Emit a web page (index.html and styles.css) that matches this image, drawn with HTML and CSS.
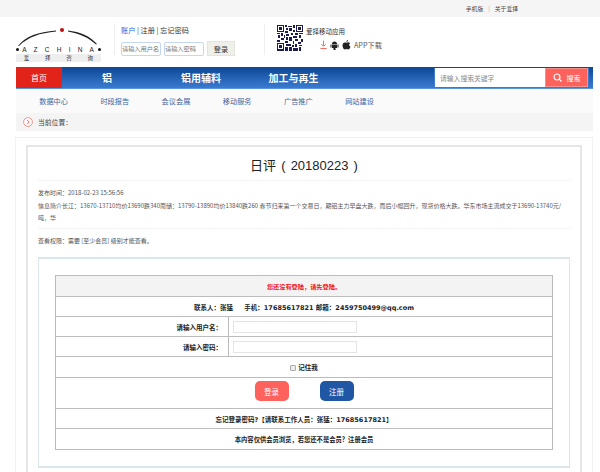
FILE: index.html
```html
<!DOCTYPE html>
<html lang="en">
<head>
  <meta charset="UTF-8">
  <meta name="viewport" content="width=device-width, initial-scale=1.0">
  <title>日评</title>
  <link rel="stylesheet" href="styles.css">
</head>
<body>

<div class="topbar">
  <a>手机版</a><span class="topbar-sep">|</span><a>关于爱择</a>
</div>

<div class="wrap">
  <div class="header">
    <div class="logo">
      <svg class="logo-arc" width="86" height="22" viewBox="0 0 86 22">
        <path d="M2 20 C10 10 22 6 40 4.5 L40 5.5 C24 7 12 11 3 20 Z" fill="#222"/>
        <path d="M52 4.5 C64 6 74 10 81 18 L80 18.500 C72 11 64 8 52 5.500 Z" fill="#222"/>
        <circle cx="46" cy="4" r="2" fill="#c00d12"/>
      </svg>
      <div class="logo-en"><i></i><span>A Z C H I N A</span><i></i></div>
      <div class="logo-cn"><span>爱</span><span>择</span><span>咨</span><span>询</span></div>
    </div>

    <div class="login-mini">
      <div class="login-links"><b>账户</b> | 注册 | 忘记密码</div>
      <div class="login-row">
        <input class="mini-input" placeholder="请输入用户名">
        <input class="mini-input" placeholder="请输入密码">
        <button class="mini-btn">登录</button>
      </div>
    </div>

    <div class="app">
      <svg class="qr" width="26" height="27" viewBox="0 0 25 25" shape-rendering="crispEdges">
        <path fill="#1c1c50" d="M0 0h7v7H0zM18 0h7v7h-7zM0 18h7v7H0z"/>
        <path fill="#fff" d="M1 1h5v5H1zM19 1h5v5h-5zM1 19h5v5H1z"/>
        <path fill="#1c1c50" d="M2 2h3v3H2zM20 2h3v3h-3zM2 20h3v3H2zM8 0h2v2H8zM11 1h3v1h-3zM15 0h2v3h-2zM9 3h2v2H9zM12 3h2v3h-2zM8 6h3v2H8zM15 5h2v2h-2zM0 8h3v1H0zM4 8h2v3H4zM9 9h3v2H9zM13 8h2v2h-2zM17 8h3v2h-3zM21 8h4v1h-4zM1 10h2v3H1zM7 10h1v3H7zM15 11h4v2h-4zM21 10h2v3h-2zM4 13h3v2H4zM9 12h2v3H9zM12 12h2v4h-2zM17 14h3v2h-3zM23 14h2v3h-2zM0 15h3v2H0zM8 16h3v2H8zM15 16h1v3h-1zM20 17h3v2h-3zM9 19h4v2H9zM17 19h2v3h-2zM14 20h2v2h-2zM21 20h3v1h-3zM8 22h3v3H8zM12 22h2v3h-2zM15 23h5v2h-5zM21 22h2v3h-2z"/>
      </svg>
      <div class="app-text">
        <div class="app-title">爱择移动应用</div>
        <div class="app-links">
          <svg width="7" height="10" viewBox="0 0 8 10"><path d="M4 0v6M1.500 4L4 6.500 6.500 4M0.500 9h7" fill="none" stroke="#f4594f" stroke-width="1"/></svg>
          <svg width="9" height="9" viewBox="0 0 9 9"><path fill="#222" d="M2 3a2.500 2.500 0 0 1 5 0zM2 3.500h5V7H5.500v2h-2V7H2zM0.500 3.500h1V6.500h-1zM7.500 3.500h1V6.500h-1z"/></svg>
          <svg width="9" height="10" viewBox="0 0 9 10"><path fill="#222" d="M6 0C6 1.200 5.200 2 4.300 2 4.300 1 5 .2 6 0zM4.400 2.700C5 2.700 5.500 2.300 6.300 2.300 7 2.300 7.700 2.700 8.100 3.300 6.700 4.100 7 6.100 8.500 6.700 8 8 7.100 9.500 6.200 9.500 5.500 9.500 5.200 9.100 4.500 9.100 3.800 9.100 3.400 9.500 2.800 9.500 1.700 9.500.5 7.400.5 5.500.5 3.600 1.700 2.500 2.800 2.500 3.400 2.500 3.900 2.700 4.400 2.700z"/></svg>
          <span>APP下载</span>
        </div>
      </div>
    </div>
  </div>

  <div class="nav">
    <a class="nav-home">首页</a>
    <a class="nav-item item-1">铝</a>
    <a class="nav-item item-2">铝用辅料</a>
    <a class="nav-item item-3">加工与再生</a>
    <div class="search">
      <input class="search-input" placeholder="请输入搜索关键字">
      <button class="search-btn">
        <svg width="9" height="9" viewBox="0 0 9 9"><circle cx="4" cy="4" r="3" fill="none" stroke="#fff" stroke-width="1.200"/><path d="M6.200 6.200L8.500 8.500" stroke="#fff" stroke-width="1.200"/></svg>
        搜索
      </button>
    </div>
  </div>

  <div class="subnav">
    <a>数据中心</a><a>时段报告</a><a>会议会展</a><a>移动服务</a><a>广告推广</a><a>网站建设</a>
  </div>

  <div class="crumb">
    <svg width="10" height="10" viewBox="0 0 10 10"><circle cx="5" cy="5" r="4.400" fill="#fff" stroke="#ef7b70" stroke-width=".8"/><path d="M4 2.800L6.200 5 4 7.200" fill="none" stroke="#ef6a5e"/></svg>
    <span>当前位置：</span>
  </div>

  <div class="outer">
    <div class="article">
      <h1 class="title">日评 ( 20180223 )</h1>
      <div class="meta">
        <p>发布时间：2018-02-23 15:56:56</p>
        <p>信息简介长江：13670-13710均价13690跌340南储：13790-13890均价13840跌260 春节归来第一个交易日，期铝主力早盘大跌，而后小幅回升，现货价格大跌。华东市场主流成交于13690-13740元/<br>吨，华</p>
      </div>
      <div class="perm">查看权限：需要 [至少会员] 级别才能查看。</div>

      <div class="login-box">
        <table class="login-table">
          <tr class="row-head"><td colspan="2" class="warn">您还没有登陆，请先登陆。</td></tr>
          <tr><td colspan="2">联系人：张猛 &nbsp;&nbsp;&nbsp; 手机：17685617821 邮箱：2459750499@qq.com</td></tr>
          <tr>
            <td class="label">请输入用户名：</td>
            <td class="field"><input class="text-input"></td>
          </tr>
          <tr>
            <td class="label">请输入密码：</td>
            <td class="field"><input class="text-input"></td>
          </tr>
          <tr class="row-check"><td colspan="2"><input type="checkbox" class="check"> 记住我</td></tr>
          <tr class="row-btn">
            <td colspan="2">
              <div class="btns">
                <button class="btn btn-login">登录</button>
                <button class="btn btn-reg">注册</button>
              </div>
            </td>
          </tr>
          <tr><td colspan="2">忘记登录密码?【请联系工作人员：张猛：17685617821】</td></tr>
          <tr class="row-last"><td colspan="2">本内容仅供会员浏览，若您还不是会员？注册会员</td></tr>
        </table>
      </div>
    </div>
  </div>
</div>

</body>
</html>
```

FILE: styles.css
```css
* {
  box-sizing: border-box;
}

html, body {
  height: 472px;
  overflow: hidden;
}

body {
  margin: 0;
  background: #fff;
  color: #333;
  font-family: "Noto Sans CJK SC", "Liberation Sans", sans-serif;
  font-size: 7px;
}

input, button {
  font-family: inherit;
  margin: 0;
}

.topbar {
  height: 17px;
  background: #f5f5f5;
  display: flex;
  align-items: center;
  justify-content: flex-end;
  padding-right: 82px;
  font-size: 5.800px;
  color: #444;
}

.topbar-sep {
  margin: 0 5px;
  color: #aaa;
}

.wrap {
  width: 578px;
  margin-left: 15px;
}

/* header */
.header {
  height: 50px;
  display: flex;
}

.logo {
  width: 99px;
  padding-top: 9px;
}

.logo-arc {
  display: block;
  margin-left: 1px;
}

.logo-en {
  display: flex;
  align-items: center;
  justify-content: space-between;
  width: 86px;
  height: 8px;
  margin-top: -3px;
  padding-left: 1px;
  font: 6.500px "Liberation Sans", sans-serif;
  color: #222;
  word-spacing: 3.500px;
  letter-spacing: 1px;
}

.logo-en i {
  width: 3px;
  height: 3px;
  border-radius: 50%;
  background: #111;
}

.logo-cn {
  display: flex;
  justify-content: space-around;
  width: 85px;
  height: 8px;
  line-height: 8px;
  margin: 1px 0 0 1px;
  background: #eee;
  font-size: 5.500px;
  color: #333;
}

.login-mini {
  width: 151px;
  height: 31px;
  margin-top: 7px;
  padding-left: 6px;
  border-left: 1px solid #eee;
  border-right: 1px solid #eee;
}

.login-links {
  height: 11px;
  line-height: 11px;
  margin-top: 1px;
  font-size: 7.200px;
  color: #333;
}

.login-links b {
  color: #2b62d9;
  font-weight: normal;
}

.login-row {
  display: flex;
  align-items: center;
  gap: 3px;
  margin-top: 5px;
}

.mini-input {
  width: 40px;
  height: 14px;
  padding: 0;
  border: 1px solid #c5d6ee;
  border-radius: 2px;
  font-size: 6.200px;
}

.mini-input::placeholder {
  color: #777;
}

.mini-btn {
  width: 28px;
  height: 15px;
  padding: 0;
  border: 1px solid #e4e4dc;
  background: #f0f0ea;
  font-size: 7.200px;
  color: #333;
}

.app {
  display: flex;
  padding: 7px 0 0 12px;
}

.qr {
  display: block;
}

.app-text {
  margin-left: 3px;
}

.app-title {
  height: 11px;
  line-height: 11px;
  margin-top: 2px;
  font-size: 6.500px;
  color: #333;
}

.app-links {
  display: flex;
  align-items: center;
  gap: 3px;
  margin: 3px 0 0 14px;
  font-size: 7.200px;
  color: #555;
}

/* nav */
.nav {
  height: 22px;
  display: flex;
  align-items: center;
  margin-left: 1px;
  background: linear-gradient(#0d4795, #3a7bd0);
  border-bottom: 1px solid #5b97e0;
  color: #fff;
}

.nav-home {
  width: 46px;
  height: 21px;
  line-height: 21px;
  text-align: center;
  background: #e2231a;
  font-size: 8px;
}

.nav-item {
  font-size: 10px;
  font-weight: bold;
  text-align: center;
}

.item-1 {
  width: 90px;
}

.item-2 {
  width: 98px;
}

.item-3 {
  width: 87px;
}

.search {
  display: flex;
  margin-left: auto;
  margin-right: 4px;
  height: 19px;
  background: #fff;
  border: 1px solid #3f7bc9;
  border-width: 0 1px;
}

.search-input {
  width: 110px;
  padding: 0 5px;
  border: 0;
  font-size: 6.800px;
}

.search-input::placeholder {
  color: #888;
}

.search-btn {
  width: 43px;
  display: flex;
  align-items: center;
  justify-content: center;
  gap: 5px;
  padding: 0;
  border: 1px solid #f49089;
  background: #fd625c;
  color: #fff;
  font-size: 7px;
}

/* sub nav */
.subnav {
  height: 24px;
  display: flex;
  align-items: center;
  margin-left: 1px;
  padding-left: 7px;
  background: #fafafa;
  color: #44649a;
  font-size: 7.200px;
}

.subnav a {
  width: 61.200px;
  text-align: center;
}

.crumb {
  height: 18px;
  display: flex;
  align-items: center;
  gap: 5px;
  margin-left: 1px;
  padding-left: 7px;
  background: #f4f4f4;
  color: #444;
  font-size: 6.800px;
}

/* content */
.outer {
  height: 336px;
  margin-top: 6px;
  padding: 7px 10px 0;
  border: 1px solid #f2f2f2;
  border-width: 1px 1px 0;
}

.article {
  height: 329px;
  padding: 0 10px;
  border: 2px solid #e6e6e6;
  border-bottom: 0;
}

.title {
  height: 34px;
  margin: 0;
  padding-top: 7px;
  text-align: center;
  font-family: "Liberation Sans", "Noto Sans CJK SC", sans-serif;
  font-size: 13px;
  font-weight: normal;
  line-height: 24px;
  word-spacing: 1.500px;
  color: #222;
  border-bottom: 1px solid #f3f3f3;
}

.meta {
  padding-top: 6px;
  height: 48px;
  font-size: 6px;
  line-height: 12.500px;
  color: #555;
  border-bottom: 1px solid #f3f3f3;
}

.meta p {
  margin: 0;
}

.perm {
  height: 28px;
  line-height: 24px;
  font-size: 6px;
  color: #555;
}

.login-box {
  height: 211px;
  padding: 16px 16px 0;
  border: 1px solid #dbe6ea;
  border-width: 2px 1px;
}

.login-table {
  width: 498px;
  border-collapse: collapse;
  border: 1px solid #b5b5b5;
  font-family: "DejaVu Sans", "Noto Sans CJK SC", sans-serif;
  font-size: 6.500px;
  font-weight: bold;
  color: #222;
}

.login-table td {
  height: 20px;
  padding: 0;
  text-align: center;
  border: 1px solid #bcbcbc;
}

.login-table .row-head td,
.login-table .row-check td,
.login-table .row-last td {
  height: 21px;
}

.login-table .row-last td {
  font-size: 6.300px;
}

.login-table .row-head td {
  background: #f3f3f3;
}

.login-table .warn {
  color: #f01414;
  font-size: 6.200px;
}

.login-table .label {
  width: 173px;
  text-align: right;
  padding-right: 6px;
}

.login-table .field {
  text-align: left;
  padding-left: 4px;
}

.text-input {
  display: block;
  width: 124px;
  height: 12px;
  border: 1px solid #e4e4e4;
}

.check {
  appearance: none;
  width: 6px;
  height: 6px;
  margin: 0;
  vertical-align: -1px;
  border: 1px solid #aaa;
  border-radius: 1px;
  background: #eee;
}

.login-table .row-btn td {
  height: 31px;
  vertical-align: top;
  padding-top: 3px;
}

.btns {
  display: flex;
  justify-content: center;
  gap: 31px;
}

.btn {
  width: 34px;
  height: 20px;
  padding: 0;
  border: 0;
  border-radius: 5px;
  color: #fff;
  font-size: 7.500px;
}

.btn-login {
  background: #fd625c;
}

.btn-reg {
  background: #2057a5;
}
```
